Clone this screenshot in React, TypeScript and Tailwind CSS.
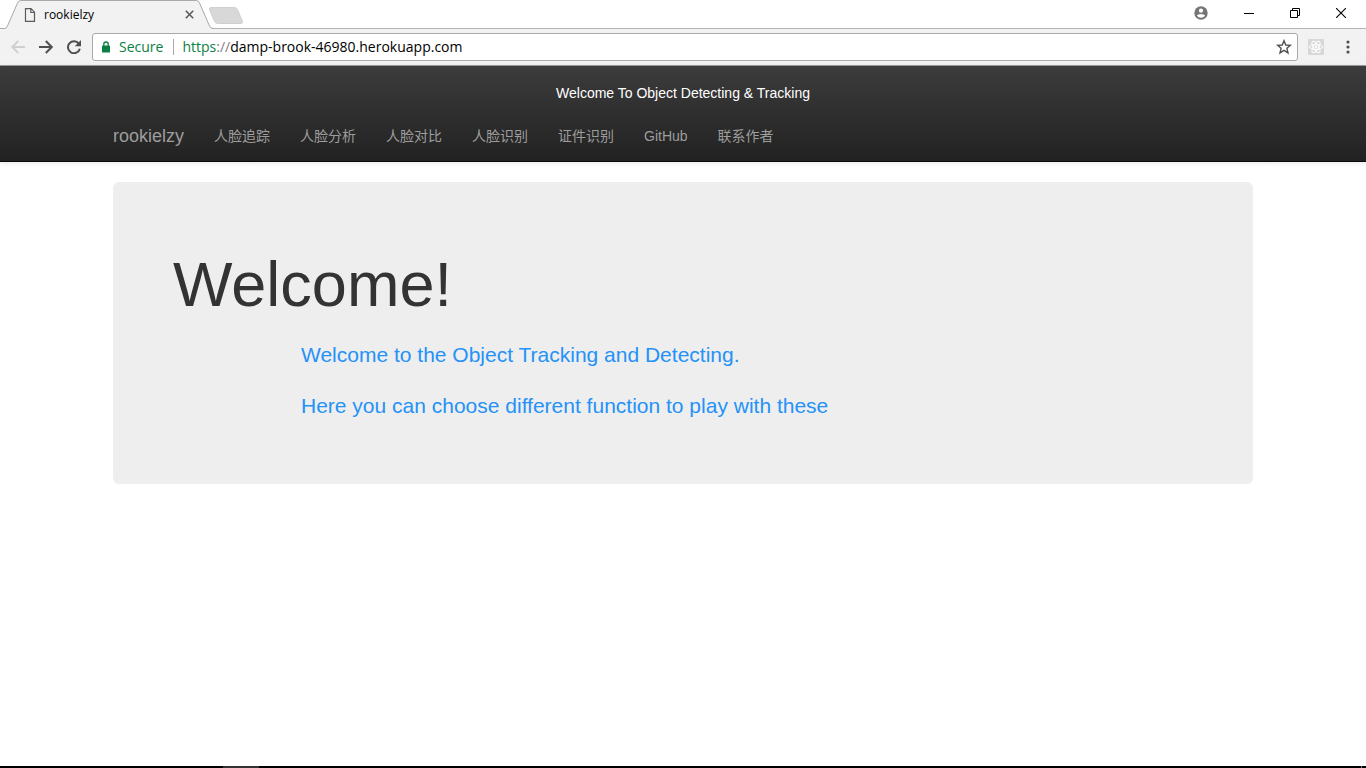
const navItems = ['人脸追踪', '人脸分析', '人脸对比', '人脸识别', '证件识别', 'GitHub', '联系作者'];

function TabStrip() {
  return (
    <div className="flex h-[29px] items-start border-b border-[#b3b3b3] bg-white">
      <div className="relative -mb-px h-[29px] w-[214px] shrink-0">
        <svg className="absolute inset-0" width="214" height="29" viewBox="0 0 214 29" aria-hidden="true">
          <path d="M0 29V28.500H4.500Q6.500 28.500 7.500 26L17.500 3Q18.500 .5 21 .5H196.500Q198.500 .5 199.500 3L209.500 26Q210.500 28.500 213 28.500H214V29Z" fill="#f2f2f2" />
          <path d="M0 28.500H4.500Q6.500 28.500 7.500 26L17.500 3Q18.500 .5 21 .5H196.500Q198.500 .5 199.500 3L209.500 26Q210.500 28.500 213 28.500H214" fill="none" stroke="#a9a9a9" />
        </svg>
        <div className="relative flex h-[29px] items-center pr-[17px] pl-6">
          <svg width="12" height="14" viewBox="0 0 12 14" fill="none" stroke="#5a5a5a" strokeWidth="1.2" aria-hidden="true">
            <path d="M1.500 .6H7L10.500 4.200V13.400H1.500ZM6.800 .8V4.500H10.400" />
          </svg>
          <span className="grow pl-2 text-[12px] leading-4 text-black">rookielzy</span>
          <button type="button" aria-label="Close tab" className="flex size-4 items-center justify-center">
            <svg width="9" height="9" viewBox="0 0 9 9" stroke="#5a5a5a" strokeWidth="1.6" aria-hidden="true">
              <path d="M.8.8 8.200 8.200M8.200.8.8 8.200" />
            </svg>
          </button>
        </div>
      </div>
      <button type="button" aria-label="New tab" className="-ml-1.5 pt-[6px]">
        <svg width="36" height="19" viewBox="0 0 36 19" aria-hidden="true">
          <path d="M3 1.500H26.500Q28.500 1.500 29.500 3.500L34.500 15.500Q35 17.500 33 17.500H9.500Q7.500 17.500 6.500 15.500L1.500 3.500Q1 1.500 3 1.500Z" fill="#d8d8d8" stroke="#c9c9c9" strokeWidth=".8" />
        </svg>
      </button>
      <div className="ml-auto flex h-[26px] items-center pr-[2px]">
        <button type="button" aria-label="Profile" className="flex w-[50px] justify-center">
          <svg width="14" height="14" viewBox="0 0 14 14" aria-hidden="true">
            <circle cx="7" cy="7" r="6.700" fill="#757575" />
            <circle cx="7" cy="4.700" r="2.100" fill="#fff" />
            <path d="M2.800 9.600Q4 8 7 8T11.200 9.600Q9.700 11.800 7 11.800T2.800 9.600Z" fill="#fff" />
          </svg>
        </button>
        <button type="button" aria-label="Minimize" className="flex w-[46px] justify-center">
          <svg width="10" height="10" viewBox="0 0 10 10" stroke="#000" aria-hidden="true">
            <path d="M0 5.500H10" />
          </svg>
        </button>
        <button type="button" aria-label="Restore" className="flex w-[46px] justify-center">
          <svg width="10" height="10" viewBox="0 0 10 10" fill="none" stroke="#000" aria-hidden="true">
            <path d="M.5 2.500H7.500V9.500H.5ZM2.500 2.500V.5H9.500V7.500H7.500" />
          </svg>
        </button>
        <button type="button" aria-label="Close" className="flex w-[46px] justify-center">
          <svg width="10" height="10" viewBox="0 0 10 10" stroke="#000" strokeWidth="1.100" aria-hidden="true">
            <path d="M0 0 10 10M10 0 0 10" />
          </svg>
        </button>
      </div>
    </div>
  );
}

function Toolbar() {
  return (
    <div className="flex h-[37px] items-center border-b border-[#9a9a9a] bg-[#f2f2f2] pr-2 pl-1">
      <button type="button" aria-label="Back" className="flex size-7 items-center justify-center">
        <svg width="14" height="14" viewBox="0 0 14 14" fill="none" stroke="#cfcfcf" strokeWidth="1.800" aria-hidden="true">
          <path d="M14 7H1.500M7.200 1 1.200 7 7.200 13" />
        </svg>
      </button>
      <button type="button" aria-label="Forward" className="flex size-7 items-center justify-center">
        <svg width="14" height="14" viewBox="0 0 14 14" fill="none" stroke="#505050" strokeWidth="2" aria-hidden="true">
          <path d="M0 7H12.500M6.800 1 12.800 7 6.800 13" />
        </svg>
      </button>
      <button type="button" aria-label="Reload" className="flex size-7 items-center justify-center">
        <svg width="14" height="14" viewBox="0 0 14 14" aria-hidden="true">
          <path d="M11.800 3.600A6 6 0 1 0 12.800 8.700" fill="none" stroke="#505050" strokeWidth="2" />
          <path d="M14 0V6.200H7.800Z" fill="#505050" />
        </svg>
      </button>
      <div className="ml-1 flex h-7 min-w-0 grow items-center rounded-[3px] border border-[#a9a9a9] bg-white px-2 text-[14px] leading-5">
        <svg width="10" height="12" viewBox="0 0 10 12" aria-hidden="true">
          <rect x="1" y="4.500" width="8" height="7" rx=".6" fill="#0b8043" />
          <path d="M2.800 5V3.200Q2.800 1 5 1T7.200 3.200V5" fill="none" stroke="#0b8043" strokeWidth="1.300" />
        </svg>
        <span className="pl-2 text-[#0b8043]">Secure</span>
        <span className="mr-2 ml-[10px] h-4 w-px bg-[#a9a9a9]" />
        <label htmlFor="address" className="text-[#808080]">
          <span className="text-[#0b8043]">https</span>://
        </label>
        <input id="address" type="text" defaultValue="damp-brook-46980.herokuapp.com" className="min-w-0 grow bg-transparent text-black outline-none" />
        <button type="button" aria-label="Bookmark this page" className="-mr-[5px] flex size-5 items-center justify-center">
          <svg width="16" height="16" viewBox="0 0 16 16" fill="none" stroke="#505050" strokeWidth="1.400" aria-hidden="true">
            <path d="M8 1.700 9.800 6 14.400 6.300 10.900 9.300 12 13.900 8 11.400 4 13.900 5.100 9.300 1.600 6.300 6.200 6Z" />
          </svg>
        </button>
      </div>
      <button type="button" aria-label="React Developer Tools" className="ml-[10px] size-4">
        <svg width="16" height="16" viewBox="0 0 16 16" fill="none" stroke="#fff" aria-hidden="true">
          <rect width="16" height="16" rx="1" fill="#d8d8d8" stroke="none" />
          <ellipse cx="8" cy="8" rx="6.500" ry="2.500" />
          <ellipse cx="8" cy="8" rx="6.500" ry="2.500" transform="rotate(60 8 8)" />
          <ellipse cx="8" cy="8" rx="6.500" ry="2.500" transform="rotate(120 8 8)" />
          <circle cx="8" cy="8" r="1.200" fill="#fff" stroke="none" />
        </svg>
      </button>
      <button type="button" aria-label="Menu" className="ml-[14px] flex h-7 w-5 items-center justify-center">
        <svg width="4" height="14" viewBox="0 0 4 14" fill="#505050" aria-hidden="true">
          <circle cx="2" cy="2" r="1.600" />
          <circle cx="2" cy="7" r="1.600" />
          <circle cx="2" cy="12" r="1.600" />
        </svg>
      </button>
    </div>
  );
}

function Navbar() {
  return (
    <header className="border-b border-[#080808] bg-linear-to-b from-[#3c3c3c] to-[#222] shadow-[0_1px_5px_rgba(0,0,0,0.1)]">
      <div className="mx-auto max-w-[1170px] px-[15px]">
        <p className="pt-[17px] pb-2 text-center leading-5 text-white">Welcome To Object Detecting &amp; Tracking</p>
        <nav className="flex h-[50px] items-center text-[#9d9d9d]">
          <a href="#" className="pr-[15px] text-[18px] leading-5">rookielzy</a>
          {navItems.map((item) => (
            <a key={item} href="#" className="px-[15px] leading-5">{item}</a>
          ))}
        </nav>
      </div>
    </header>
  );
}

export default function App() {
  return (
    <div className="flex min-h-screen flex-col bg-white">
      <div className="font-['Open_Sans','Noto_Sans',sans-serif]">
        <TabStrip />
        <Toolbar />
      </div>
      <div className="grow font-['Liberation_Sans','Noto_Sans_CJK_SC',sans-serif] text-[14px]">
        <Navbar />
        <main className="mx-auto max-w-[1170px] px-[15px] pt-5">
          <section className="rounded-[6px] bg-[#eee] px-[60px] pt-[68px] pb-[63px]">
            <h1 className="text-[63px] leading-[69px] font-medium text-[#333]">Welcome!</h1>
            <div className="mt-[21px] flex flex-col gap-[21px] pl-32 text-[21px] leading-[30px] text-[#2492f8]">
              <p>Welcome to the Object Tracking and Detecting.</p>
              <p>Here you can choose different function to play with these</p>
            </div>
          </section>
        </main>
      </div>
      <footer className="flex h-[2px] justify-between bg-black">
        <div className="ml-[223px] w-9 bg-[#333]" />
        <div className="mr-1 w-px bg-[#777]" />
      </footer>
    </div>
  );
}
